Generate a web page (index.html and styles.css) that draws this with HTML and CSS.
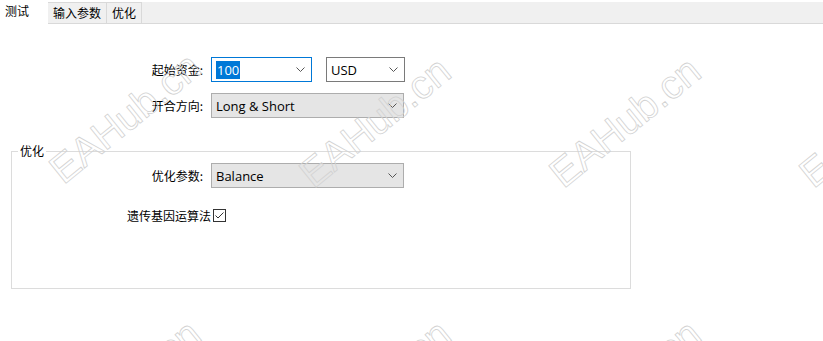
FILE: index.html
```html
<!DOCTYPE html>
<html lang="zh-CN">
<head>
    <meta charset="UTF-8">
    <title>测试</title>
    <link rel="stylesheet" href="styles.css">
</head>
<body>
    <div class="window">
        <div class="tabs">
            <div class="tab tab-active">测试</div>
            <div class="tab">输入参数</div>
            <div class="tab">优化</div>
            <div class="tab-fill"></div>
        </div>

        <div class="page">
            <div class="form">
                <div class="form-label">起始资金:</div>
                <div class="field-row">
                    <div class="combo combo-focus">
                        <span class="combo-text"><span class="selected">100</span></span>
                        <svg class="chevron" width="9" height="5" viewBox="0 0 9 5"><path d="M0.5 0.5 L4.5 4.5 L8.5 0.5" /></svg>
                    </div>
                    <div class="combo combo-small">
                        <span class="combo-text">USD</span>
                        <svg class="chevron" width="9" height="5" viewBox="0 0 9 5"><path d="M0.5 0.5 L4.5 4.5 L8.5 0.5" /></svg>
                    </div>
                </div>

                <div class="form-label">开合方向:</div>
                <div class="combo combo-wide combo-gray">
                    <span class="combo-text">Long &amp; Short</span>
                    <svg class="chevron" width="9" height="5" viewBox="0 0 9 5"><path d="M0.5 0.5 L4.5 4.5 L8.5 0.5" /></svg>
                </div>
            </div>

            <fieldset class="group">
                <legend>优化</legend>
                <div class="form form-inner">
                    <div class="form-label">优化参数:</div>
                    <div class="combo combo-wide combo-gray">
                        <span class="combo-text">Balance</span>
                        <svg class="chevron" width="9" height="5" viewBox="0 0 9 5"><path d="M0.5 0.5 L4.5 4.5 L8.5 0.5" /></svg>
                    </div>
                </div>
                <div class="check-row">
                    <span class="check-label">遗传基因运算法</span>
                    <svg class="checkbox" width="13" height="13" viewBox="0 0 13 13">
                        <rect x="0.5" y="0.5" width="12" height="12" fill="#fff" stroke="#333" />
                        <path d="M2.5 6.5 L5 9 L10.5 3.5" fill="none" stroke="#333" stroke-width="1" />
                    </svg>
                </div>
            </fieldset>
        </div>

        <div class="watermarks">
            <span class="wm" style="left:125px; top:118px">EAHub.cn</span>
            <span class="wm" style="left:375px; top:122px">EAHub.cn</span>
            <span class="wm" style="left:625px; top:122px">EAHub.cn</span>
            <span class="wm" style="left:875px; top:122px">EAHub.cn</span>
            <span class="wm" style="left:125px; top:385px">EAHub.cn</span>
            <span class="wm" style="left:375px; top:385px">EAHub.cn</span>
            <span class="wm" style="left:625px; top:385px">EAHub.cn</span>
        </div>
    </div>
</body>
</html>
```

FILE: styles.css
```css
/* WinForms style tester panel */
body {
    margin: 0;
    padding: 0;
    background-color: #ffffff;
    font-family: "Noto Sans CJK SC", "Noto Sans", sans-serif;
    font-size: 12px;
    color: #000000;
}

.window {
    position: relative;
    width: 823px;
    height: 341px;
    overflow: hidden;
}

/* Tabs */
.tabs {
    display: flex;
    height: 24px;
}

.tab {
    box-sizing: border-box;
    height: 22px;
    margin-top: 2px;
    padding: 0 5px;
    line-height: 20px;
    background-color: #f0f0f0;
    border: 1px solid #d9d9d9;
    border-left: none;
}

.tab-active {
    width: 48px;
    height: 24px;
    margin-top: 0;
    padding: 0 5px;
    line-height: 22px;
    background-color: #ffffff;
    border: none;
}

.tab-fill {
    flex: 1;
    box-sizing: border-box;
    height: 22px;
    margin-top: 2px;
    background-color: #f0f0f0;
    border-bottom: 1px solid #d9d9d9;
}

/* Form rows */
.page {
    padding-top: 33px;
}

.form {
    display: grid;
    grid-template-columns: 203px auto;
    column-gap: 8px;
    row-gap: 11px;
    align-items: center;
    justify-content: start;
}

.form-inner {
    grid-template-columns: 191px auto;
}

.form-label {
    text-align: right;
    white-space: nowrap;
}

.field-row {
    display: flex;
    gap: 14px;
}

.combo {
    box-sizing: border-box;
    display: flex;
    align-items: center;
    justify-content: space-between;
    height: 25px;
    padding: 0 6px 0 3px;
    border: 1px solid #7a7a7a;
    background-color: #ffffff;
    font-family: "Open Sans", "Noto Sans", sans-serif;
    font-size: 13px;
}

.combo-focus {
    width: 101px;
    border-color: #0078d7;
}

.combo-small {
    width: 79px;
}

.combo-wide {
    width: 193px;
}

.combo-gray {
    background-color: #e5e5e5;
    border-color: #adadad;
}

.combo-text {
    padding-left: 1px;
    white-space: nowrap;
}

.selected {
    background-color: #0078d7;
    color: #ffffff;
    padding: 0 1px;
}

.chevron path {
    fill: none;
    stroke: #555555;
    stroke-width: 1;
}

/* Group box */
.group {
    box-sizing: border-box;
    width: 620px;
    height: 146px;
    margin: 25px 0 0 11px;
    padding: 4px 0 0 0;
    border: 1px solid #dcdcdc;
}

.group legend {
    margin-left: 6px;
    padding: 0 2px;
    line-height: 16px;
}

.check-row {
    display: flex;
    align-items: center;
    justify-content: flex-end;
    gap: 2px;
    width: 214px;
    margin-top: 19px;
}

.checkbox {
    display: block;
}

/* Watermark overlay */
.watermarks {
    position: absolute;
    top: 0;
    left: 0;
    right: 0;
    bottom: 0;
    pointer-events: none;
}

.wm {
    position: absolute;
    transform: translate(-50%, -50%) rotate(-39deg);
    font-family: "Liberation Sans", Arial, sans-serif;
    font-size: 40px;
    white-space: nowrap;
    color: transparent;
    -webkit-text-stroke: 0.8px #d2d2d2;
}
```
